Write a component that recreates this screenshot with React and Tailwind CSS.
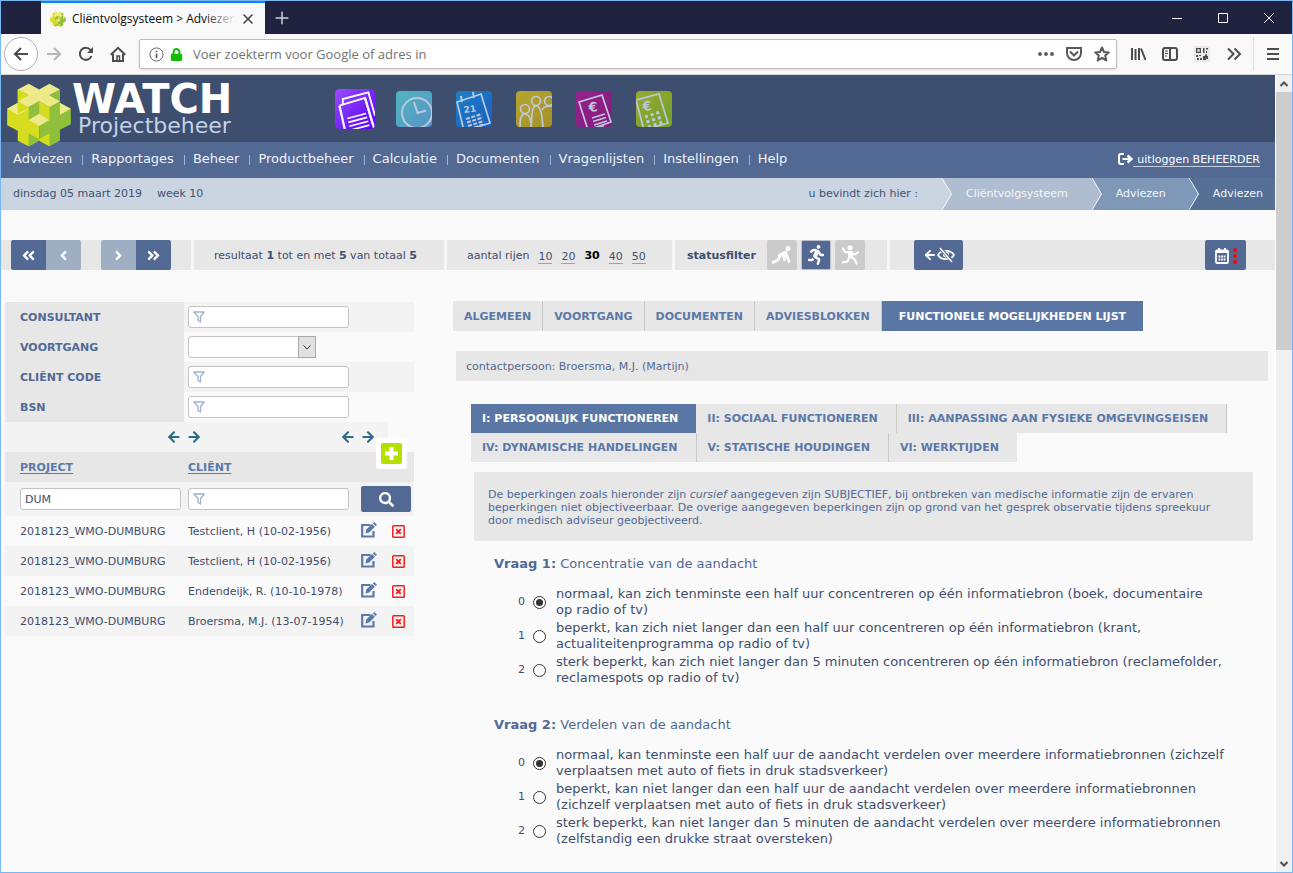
import React from "react";
import {
  FaAngleDoubleLeft,
  FaAngleDoubleRight,
  FaAngleLeft,
  FaAngleRight,
  FaSearch,
  FaRunning,
  FaLock,
} from "react-icons/fa";
import { ArrowLeft, ArrowRight, X, Plus } from "lucide-react";

const UI = "font-['Open_Sans','Noto_Sans',sans-serif]";

function Cubes({ className }) {
  const light = "#eeea8a";
  const lime = "#d6dc1e";
  const green = "#8fbf3b";
  return (
    <svg viewBox="18 15 197 194" className={className} aria-hidden="true">
      <polygon fill={lime} points="52,35 85,52 85,88 117,70 117,190 85,207 52,190 52,160 20,143 20,93 52,75" />
      <polygon fill={green} points="180,35 180,75 213,93 213,140 180,157 180,190 148,207 117,190 117,70 148,88 148,52" />
      <polygon fill={light} points="85,17 117,35 148,17 180,35 148,52 180,70 148,88 117,70 85,88 52,70 85,52 52,35" />
      <polygon fill={lime} points="52,35 85,52 52,70" />
      <polygon fill={green} points="180,35 148,52 180,70" />
      <polygon fill={light} points="20,93 52,76 52,111" />
      <polygon fill={light} points="213,93 180,76 180,111" />
      <polygon fill={light} points="52,108 85,93 85,95 52,112" />
      <polygon fill={green} points="85,88 117,70 117,108 85,127" />
      <polygon fill={lime} points="117,70 148,88 148,127 117,108" />
      <polygon fill={light} points="117,108 148,127 117,145 85,127" />
      <polygon fill={green} points="85,168 117,185 117,190 85,207" />
      <polygon fill={lime} points="148,168 117,185 117,190 148,207" />
    </svg>
  );
}

function AppTile({ children, id, from, to, active }) {
  return (
    <svg viewBox="0 0 36 36" className={active ? "size-[40px]" : "size-[36px] opacity-90"} aria-hidden="true">
      <defs>
        <linearGradient id={id} x1="0" y1="0" x2="1" y2="1">
          <stop offset="0" stopColor={from} />
          <stop offset="1" stopColor={to} />
        </linearGradient>
        <clipPath id={id + "-clip"}>
          <rect width="36" height="36" rx="4" />
        </clipPath>
      </defs>
      <g clipPath={`url(#${id}-clip)`}>
        <rect width="36" height="36" fill={`url(#${id})`} />
        <g fill="none" stroke={active ? "#ffffff" : "#ccd6e6"} strokeWidth="1.7">
          {children}
        </g>
      </g>
    </svg>
  );
}

const tileButtons = [
  {
    label: "Adviezen",
    el: (
      <AppTile id="t1" from="#9a4dff" to="#5a00f5" active>
        <path d="M7 14 L7 9 L30 3 L36 24" />
        <path d="M4 15 L27 8 L34 32" />
        <path d="M4 15 L9 37 M27 8 L36 38" strokeWidth="2" />
        <path d="M11 26.5 L28 22 M12 30 L29 25.5 M13 33.5 L30 29 M14 37 L31 32.5" strokeWidth="1.5" />
      </AppTile>
    ),
  },
  {
    label: "Uren",
    el: (
      <AppTile id="t2" from="#52c3ca" to="#5a9bd2">
        <circle cx="21" cy="22" r="15" strokeWidth="2" />
        <path d="M18 11 L21.500 22 L30 19.500" strokeWidth="2" />
      </AppTile>
    ),
  },
  {
    label: "Agenda",
    el: (
      <AppTile id="t3" from="#1a86d0" to="#1560cc">
        <path d="M1 11 L25 3 L34 32 L8 40 Z" />
        <path d="M5 5 L6 11 M17 1 L18 7" strokeWidth="2" />
        <text x="8" y="22" transform="rotate(-8 8 22)" fontSize="9" fontWeight="bold" fontFamily="DejaVu Sans" fill="#ccd6e6" stroke="none">21</text>
        <path d="M10 28 L26 23 M11 31.5 L27 26.5 M12 35 L28 30 M13 38 L29 33" strokeDasharray="4 1.5" strokeWidth="2" />
      </AppTile>
    ),
  },
  {
    label: "Relaties",
    el: (
      <AppTile id="t4" from="#c4b02b" to="#b09820">
        <circle cx="9" cy="18" r="4.5" />
        <circle cx="20" cy="10" r="4.5" />
        <circle cx="33" cy="10" r="4.5" />
        <path d="M4 37 C4 27 5 23 9 23 C12 23 14 25 15 32 M15 37 C16 22 16 15 20 15 C25 15 26 24 27 37 M26 19 C28 15 31 15 36 15" />
      </AppTile>
    ),
  },
  {
    label: "Facturen",
    el: (
      <AppTile id="t5" from="#a01f90" to="#8a1580">
        <path d="M3 11 L26 4 L35 31 L12 39 Z" />
        <text x="13" y="21" transform="rotate(-6 13 21)" fontSize="13" fontWeight="bold" fontFamily="DejaVu Sans" fill="#ccd6e6" stroke="none">€</text>
        <path d="M16 27 L29 23 M17 30.5 L30 26.5 M18 34 L31 30 M19 37.5 L28 34.5" />
      </AppTile>
    ),
  },
  {
    label: "Calculatie",
    el: (
      <AppTile id="t6" from="#a3b52a" to="#78a826">
        <path d="M0 9 L23 3 L32 32 L8 39 Z" />
        <text x="7" y="20" transform="rotate(-6 7 20)" fontSize="13" fontWeight="bold" fontFamily="DejaVu Sans" fill="#ccd6e6" stroke="none">€</text>
        <path d="M9 26 L24 21 M10.500 31 L25.500 26 M12 36 L27 31" strokeDasharray="3 3" strokeWidth="3" />
      </AppTile>
    ),
  },
];

const menu = ["Adviezen", "Rapportages", "Beheer", "Productbeheer", "Calculatie", "Documenten", "Vragenlijsten", "Instellingen", "Help"];

function BrowserBar() {
  const icon = "size-4 fill-none stroke-[#4d4d4f] stroke-2";
  return (
    <header className={`shrink-0 ${UI}`}>
      <div className="flex h-[33px] items-stretch bg-[#202340]">
        <div className="ml-10 flex w-[224px] items-center border-t-2 border-[#0a84ff] bg-[#f9f9fa] pr-2 pl-[9px]">
          <Cubes className="mr-1.5 size-4" />
          <span className="relative w-[164px] overflow-hidden text-[12px] whitespace-nowrap text-[#0c0c0d]">
            Cliëntvolgsysteem &gt; Adviezen &gt;
            <span className="absolute inset-y-0 right-0 w-8 bg-gradient-to-r from-transparent to-[#f9f9fa]" />
          </span>
          <button aria-label="Tabblad sluiten" className="ml-1"><X className="size-4 text-[#3a3a3c]" strokeWidth={2.2} /></button>
        </div>
        <button aria-label="Nieuw tabblad" className="ml-[7px]"><Plus className="size-5 text-[#d0d0d8]" strokeWidth={1.800} /></button>
        <div className="ml-auto flex items-center">
          <button aria-label="Minimaliseren" className="flex w-[46px] justify-center"><svg viewBox="0 0 10 10" className="size-[10px] stroke-white"><path d="M0 5.500H10" /></svg></button>
          <button aria-label="Maximaliseren" className="flex w-[46px] justify-center"><svg viewBox="0 0 10 10" className="size-[10px] fill-none stroke-white"><path d="M.5 .5H9.500V9.500H.5Z" /></svg></button>
          <button aria-label="Sluiten" className="flex w-[46px] justify-center"><svg viewBox="0 0 10 10" className="size-[10px] stroke-white"><path d="M0 0L10 10M10 0L0 10" /></svg></button>
        </div>
      </div>
      <div className="flex h-[41px] items-center border-b border-[#d4d4d6] bg-[#f9f9fa]">
        <button aria-label="Terug" className="ml-[3px] flex size-[34px] items-center justify-center rounded-full border border-[#b1b1b3] bg-white">
          <svg viewBox="0 0 16 16" className={icon}><path d="M15 8H2M8 2L2 8L8 14" /></svg>
        </button>
        <button aria-label="Vooruit" className="ml-2">
          <svg viewBox="0 0 16 16" className="size-4 fill-none stroke-[#b5b5b7] stroke-2"><path d="M1 8H14M8 2L14 8L8 14" /></svg>
        </button>
        <button aria-label="Vernieuwen" className="ml-4">
          <svg viewBox="0 0 16 16" className={icon}><path d="M13.500 10A6 6 0 1 1 12.500 4" /><path d="M15 1V7H9Z" fill="#4d4d4f" stroke="none" /></svg>
        </button>
        <button aria-label="Startpagina" className="ml-4">
          <svg viewBox="0 0 16 16" className={icon}><path d="M.8 8.800L8 1.800L15.200 8.800M3 8V15H13V8" /><path d="M7 15V10H9.500V15" strokeWidth="1.500" /></svg>
        </button>
        <label className="ml-[13px] flex h-[30px] flex-1 items-center rounded-[2px] border border-[#bcbcbe] bg-white pr-1.5 pl-[9px] shadow-sm">
          <svg viewBox="0 0 16 16" className="size-[15px] fill-none stroke-[#606062]"><circle cx="8" cy="8" r="7" /><path d="M8 7V12M8 4V5.600" strokeWidth="1.800" /></svg>
          <FaLock className="ml-1.5 size-[13px] text-[#12bc00]" />
          <input aria-label="Adres" placeholder="Voer zoekterm voor Google of adres in" className="ml-2.5 min-w-0 flex-1 pt-0.5 text-[13px] outline-none placeholder:text-[#737373]" />
          <svg viewBox="0 0 16 4" className="h-1 w-4 fill-[#5a5a5c]"><circle cx="2" cy="2" r="1.900" /><circle cx="8" cy="2" r="1.900" /><circle cx="14" cy="2" r="1.900" /></svg>
          <svg viewBox="0 0 16 16" className="ml-3 size-4 fill-none stroke-[#5a5a5c] stroke-2"><path d="M1 2H15V7A7 7 0 0 1 1 7ZM4.500 6L8 9.500L11.500 6" strokeLinecap="round" /></svg>
          <svg viewBox="0 0 16 16" className="ml-3 size-4 fill-none stroke-[#5a5a5c] stroke-2"><path d="M8 1.500L10 6L14.700 6.400L11.200 9.600L12.300 14.400L8 11.800L3.700 14.400L4.800 9.600L1.300 6.400L6 6Z" strokeLinejoin="round" /></svg>
        </label>
        <button aria-label="Bibliotheek" className="ml-[13px]"><svg viewBox="0 0 16 16" className={icon}><path d="M2 2V14M5.500 3V14M9 2V14M11 2.500L15.500 14" /></svg></button>
        <button aria-label="Zijbalk" className="ml-4"><svg viewBox="0 0 16 16" className={icon}><rect x="1" y="2" width="14" height="12" rx="2" /><path d="M8 2V14" /><path d="M3 5H6M3 7.500H6M3 10H5" strokeWidth="1" /></svg></button>
        <button aria-label="QR-code" className="ml-4">
          <svg viewBox="0 0 16 16" className="size-4 fill-[#4d4d4f]">
            <rect width="16" height="16" fill="#e9e9ea" />
            <path fillRule="evenodd" d="M2 2H7V7H2ZM3.300 3.300V5.700H5.700V3.300ZM9 2H10.500V7H9ZM12 2H14V3.500H12ZM12 5H13V7H12ZM2 9H4V11H2ZM5 9H7V10H5ZM3 12H5V14H3ZM6 12H8V14H6ZM9 10H11V8.500H13V10H14V13H12V14H9Z" />
          </svg>
        </button>
        <button aria-label="Meer" className="ml-4"><svg viewBox="0 0 16 16" className={icon}><path d="M2 2.500L7.500 8L2 13.500M8.500 2.500L14 8L8.500 13.500" /></svg></button>
        <span className="ml-[11px] h-[34px] border-l border-[#dcdcde]" />
        <button aria-label="Menu" className="mr-[11px] ml-[11px]"><svg viewBox="0 0 16 16" className={icon}><path d="M2 3H14M2 8H14M2 13H14" /></svg></button>
      </div>
    </header>
  );
}

function CrumbArrow({ from, to }) {
  return (
    <svg viewBox="0 0 10 32" className="h-8 w-[10px] shrink-0" aria-hidden="true">
      <rect width="10" height="32" fill={to} />
      <path d="M0 0L9.500 16L0 32Z" fill={from} />
      <path d="M0 0L9.500 16L0 32" fill="none" stroke="#f4f6f9" />
    </svg>
  );
}

function AppHeader() {
  return (
    <div>
      <div className="relative flex h-[67px] items-start bg-[#3e4e6e]">
        <a href="#home" className="absolute top-[8px] left-[5px] z-10 flex" aria-label="WATCH Projectbeheer">
          <Cubes className="h-[64px] w-[66px]" />
        </a>
        <div className="w-[334px] shrink-0 pl-[71px] text-white">
          <div className="pt-1 text-[40px] leading-[40px] font-bold">WATCH</div>
          <div className="pl-[6px] text-[22px] leading-[14px] text-[#c3d2e6]">Projectbeheer</div>
        </div>
        <nav className="mt-[14px] flex items-center" aria-label="Modules">
          {tileButtons.map((t, i) => (
            <a key={t.label} href="#module" aria-label={t.label} className={i === 0 ? "mr-[21px] flex" : "mr-6 flex"}>{t.el}</a>
          ))}
        </nav>
      </div>
      <div className="flex h-9 items-center bg-[#526994] pr-[15px] pl-3">
        <nav className="flex items-center pb-[3px] text-[13px] text-[#eef2f8]">
          {menu.map((m, i) => (
            <React.Fragment key={m}>
              {i > 0 && <span className="mt-[3px] mr-2 ml-[10px] h-[10px] border-l border-[#9db4d3]" />}
              <a href="#menu">{m}</a>
            </React.Fragment>
          ))}
        </nav>
        <a href="#logout" className="ml-auto flex items-center pb-[3px] text-[11px] text-white">
          <svg viewBox="0 0 15 12" className="h-3 w-[15px] fill-none stroke-white stroke-2" aria-hidden="true"><path d="M6 1H3A2 2 0 0 0 1 3V9A2 2 0 0 0 3 11H6M4.500 6H12" /><path d="M9.500 2.500L13.500 6L9.500 9.500" strokeWidth="2.400" /></svg>
          <span className="mt-0.5 border-b border-[#c4cfdf] pl-1 leading-[13px]">uitloggen BEHEERDER</span>
        </a>
      </div>
      <div className="flex h-8 items-center bg-[#cbd5e1] text-[11px] text-[#3e5274]">
        <span className="pl-3">dinsdag 05 maart 2019</span>
        <span className="pl-[15px]">week 10</span>
        <nav className="ml-auto flex items-stretch text-[#f4f6f9]" aria-label="Kruimelpad">
          <span className="flex items-center pr-[24px] text-[#3e5274]">u bevindt zich hier :</span>
          <CrumbArrow from="#cbd5e1" to="#afbdd1" />
          <a href="#a" className="flex items-center bg-[#afbdd1] pr-[24px] pl-3.5">Cliëntvolgsysteem</a>
          <CrumbArrow from="#afbdd1" to="#7f98b7" />
          <a href="#b" className="flex items-center bg-[#7f98b7] pr-[23px] pl-3.5">Adviezen</a>
          <CrumbArrow from="#7f98b7" to="#547094" />
          <a href="#c" className="flex items-center bg-[#547094] pr-3 pl-3.5">Adviezen</a>
        </nav>
      </div>
    </div>
  );
}

function Crawler() {
  return (
    <svg viewBox="0 0 20 20" className="size-5" aria-hidden="true">
      <circle cx="16" cy="3.500" r="2.500" fill="white" />
      <path d="M13.500 7L17 16.500M13 7L7 10.500M12.500 8L12.500 15M8 11L6 15L1 17.500" fill="none" stroke="white" strokeWidth="2.600" strokeLinecap="round" />
      <path d="M8 9L13 6L15 9L11 13Z" fill="white" />
    </svg>
  );
}

function Finisher() {
  return (
    <svg viewBox="0 0 20 20" className="size-5" aria-hidden="true">
      <circle cx="10" cy="2.800" r="2.500" fill="white" />
      <path d="M10 7L10.500 12M9 7.500L5 7L3 3.500M11 7.500L14.500 9.500L18 7.500M11 12L14.500 14L16.500 18.500M9.500 12L7.500 16.500L3 17.500" fill="none" stroke="white" strokeWidth="2.200" strokeLinecap="round" strokeLinejoin="round" />
      <path d="M7.500 6H12.500L13 13H8.500Z" fill="white" />
    </svg>
  );
}

function Toolbar() {
  const blue = "flex h-[30px] w-[35px] items-center justify-center bg-[#526994] text-white";
  const pale = "flex h-[30px] w-[35px] items-center justify-center bg-[#9fafc3] text-white";
  const sep = "w-[3px] shrink-0 bg-[#f6f6f6]";
  const count = "border-b border-[#8fa3c4] leading-[13px]";
  return (
    <div className="mt-[30px] flex h-[30px] items-stretch bg-[#e7e7e7] text-[11px] text-[#3e4e6e]">
      <div className="flex w-[190px] pl-2.5">
        <button aria-label="Eerste pagina" className={`${blue} rounded-l-[2px]`}><FaAngleDoubleLeft className="size-[15px]" /></button>
        <button aria-label="Vorige pagina" className={`${pale} rounded-r-[2px]`}><FaAngleLeft className="size-[15px]" /></button>
        <button aria-label="Volgende pagina" className={`${pale} ml-5 rounded-l-[2px]`}><FaAngleRight className="size-[15px]" /></button>
        <button aria-label="Laatste pagina" className={`${blue} rounded-r-[2px]`}><FaAngleDoubleRight className="size-[15px]" /></button>
      </div>
      <span className={sep} />
      <p className="flex w-[250px] items-center pt-[3px] pl-5"><span>resultaat <b>1</b> tot en met <b>5</b> van totaal <b>5</b></span></p>
      <span className={sep} />
      <div className="flex w-[225px] items-center gap-[9px] pt-[3px] pl-5">
        <span>aantal rijen</span>
        <a href="#10" className={count}>10</a>
        <a href="#20" className={count}>20</a>
        <b className="text-black">30</b>
        <a href="#40" className={count}>40</a>
        <a href="#50" className={count}>50</a>
      </div>
      <span className={sep} />
      <div className="flex w-[212px] items-center pl-3">
        <b className="w-20 pt-[3px]">statusfilter</b>
        <div className="flex gap-1">
          <button aria-label="Niet gestart" className="flex size-[30px] items-center justify-center rounded-[2px] bg-[#cbcbcb]"><Crawler /></button>
          <button aria-label="Lopend" className="flex size-[30px] items-center justify-center rounded-[2px] border border-[#b9bec8] bg-[#526994]"><FaRunning className="size-5 text-white" /></button>
          <button aria-label="Afgerond" className="flex size-[30px] items-center justify-center rounded-[2px] bg-[#cbcbcb]"><Finisher /></button>
        </div>
      </div>
      <span className={sep} />
      <div className="flex flex-1 justify-between pr-[29px] pl-[24px]">
        <button aria-label="Kolom verbergen" className="flex w-[49px] items-center justify-center rounded-[2px] bg-[#526994] text-white">
          <ArrowLeft className="size-3.5" strokeWidth={3.4} />
          <svg viewBox="0 0 18 16" className="h-4 w-[18px] fill-none stroke-white"><path d="M1 8C4 2.500 14 2.500 17 8C14 13.500 4 13.500 1 8Z" strokeWidth="1.600" /><circle cx="9" cy="7.500" r="3" fill="white" stroke="none" /><path d="M3 1L16 15" stroke="#526994" strokeWidth="3.400" /><path d="M3 1L15 15" strokeWidth="1.500" /></svg>
        </button>
        <button aria-label="Agenda opties" className="flex w-[41px] items-center justify-center gap-1 rounded-[2px] bg-[#526994] pt-0.5">
          <svg viewBox="0 0 14 16" className="h-4 w-3.5 fill-none stroke-white"><rect x="1" y="2.500" width="12" height="12.500" rx="1" strokeWidth="1.800" /><path d="M1 4H13M4 0V3M10 0V3" strokeWidth="2" /><path d="M3.500 8.500H10.500M3.500 11.500H10.500" strokeWidth="1.800" strokeDasharray="1.800 0.800" /></svg>
          <svg viewBox="0 0 4 16" className="h-4 w-1 fill-[#ff0000]"><circle cx="2" cy="2.200" r="2" /><circle cx="2" cy="8" r="2" /><circle cx="2" cy="13.800" r="2" /></svg>
        </button>
      </div>
    </div>
  );
}

function FilterInput({ id, label, value }) {
  return (
    <span className="flex h-[22px] w-[161px] items-center rounded-[3px] border border-[#c4c4c4] bg-white pl-1">
      {!value && (
        <svg viewBox="0 0 12 12" className="size-3 shrink-0 fill-none stroke-[#9fb3cd]" aria-hidden="true"><path d="M.8 1H11.200L7.500 5.500V11L5 9.500V5.500Z" strokeWidth="1.300" strokeLinejoin="round" /></svg>
      )}
      <input id={id} aria-label={label} defaultValue={value} className="w-full min-w-0 bg-transparent pt-0.5 outline-none" />
    </span>
  );
}

const clients = ["Testclient, H (10-02-1956)", "Testclient, H (10-02-1956)", "Endendeijk, R. (10-10-1978)", "Broersma, M.J. (13-07-1954)"];

function EditIcon() {
  return (
    <svg viewBox="0 0 16 16" className="mb-0.5 size-4 fill-none stroke-[#5a78a8]" aria-hidden="true">
      <path d="M9.500 3H1.200V14.500H12.500V9" strokeWidth="2.200" />
      <path d="M4.500 11.500L5.200 7.600L11 2L13.900 4.800L8.200 10.600Z" fill="#5a78a8" stroke="none" />
      <path d="M11.800 1.300L13.200 0L16 2.700L14.600 4.100Z" fill="#5a78a8" stroke="none" />
    </svg>
  );
}

function DeleteIcon() {
  return (
    <svg viewBox="0 0 13 13" className="size-[13px] fill-none stroke-[#f21d1d]" aria-hidden="true">
      <rect x=".8" y=".8" width="11.400" height="11.400" rx=".8" strokeWidth="1.500" />
      <path d="M4.200 4.200L8.800 8.800M8.800 4.200L4.200 8.800" strokeWidth="1.800" />
    </svg>
  );
}

function ColumnArrows() {
  const a = "size-4 text-[#2e6b85]";
  return (
    <span className="flex gap-1">
      <ArrowLeft className={a} strokeWidth={3.2} />
      <ArrowRight className={a} strokeWidth={3.2} />
    </span>
  );
}

function ClientPanel() {
  const fields = ["CONSULTANT", "VOORTGANG", "CLIËNT CODE", "BSN"];
  return (
    <aside className="mt-[32px] ml-1 w-[409px] shrink-0 text-[11px] text-[#3e4e6e]">
      {fields.map((f, i) => (
        <div key={f} className={`flex h-[30px] ${i % 2 ? "" : "bg-[#f3f3f3]"}`}>
          <label htmlFor={`f${i}`} className="flex w-[179px] items-center bg-[#e7e7e7] pt-0.5 pl-[15px] font-bold text-[#526994]">{f}</label>
          <div className="flex items-center pl-1">
            {i === 1 ? (
              <span className="relative flex">
                <select id="f1" className="h-[22px] w-[128px] appearance-none rounded-[3px] border border-[#c4c4c4] bg-white" />
                <span className="pointer-events-none absolute inset-y-0 right-0 flex w-[18px] items-center justify-center border border-[#a8a8a8] bg-[#e1e1e1]">
                  <svg viewBox="0 0 8 5" className="h-[5px] w-2 fill-none stroke-[#333]"><path d="M.5 .5L4 4L7.500 .5" /></svg>
                </span>
              </span>
            ) : (
              <FilterInput id={`f${i}`} />
            )}
          </div>
        </div>
      ))}
      <div className="flex h-[30px] w-[383px] items-center justify-between bg-[#f3f3f3] pr-3 pl-[161px]">
        <ColumnArrows />
        <ColumnArrows />
      </div>
      <div className="relative">
        <button aria-label="Toevoegen" className="absolute -top-3.5 left-[371px] flex size-[31px] items-center justify-center rounded-[3px] bg-white">
          <svg viewBox="0 0 21 21" className="size-[21px]"><rect width="21" height="21" rx="2" fill="#b4e000" /><path d="M10.500 4V17M4 10.500H17" stroke="white" strokeWidth="4" /></svg>
        </button>
        <table className="w-full table-fixed border-collapse">
          <colgroup>
            <col className="w-[179px]" />
            <col className="w-[174px]" />
            <col className="w-[31px]" />
            <col className="w-[25px]" />
          </colgroup>
          <thead>
            <tr className="h-[30px] bg-[#e7e7e7] text-left text-[#5a78a8]">
              <th className="p-0 pt-0.5 pl-[15px]"><a href="#project" className="underline underline-offset-2">PROJECT</a></th>
              <th className="p-0 pt-0.5 pl-1"><a href="#client" className="underline underline-offset-2">CLIËNT</a></th>
              <th colSpan={2} className="p-0" />
            </tr>
            <tr className="h-[34px] bg-[#f3f3f3] text-left font-normal">
              <td className="p-0 pl-[15px]"><FilterInput label="Project" value="DUM" /></td>
              <td className="p-0 pl-1"><FilterInput label="Cliënt" /></td>
              <td colSpan={2} className="p-0 pl-[3px]">
                <button aria-label="Zoeken" className="flex h-[26px] w-[50px] items-center justify-center rounded-[2px] bg-[#526994] text-white"><FaSearch className="size-[15px]" /></button>
              </td>
            </tr>
          </thead>
          <tbody>
            {clients.map((c, i) => (
              <tr key={i} className={`h-[30px] whitespace-nowrap ${i % 2 ? "bg-[#f3f3f3]" : ""}`}>
                <td className="p-0 pt-[3px] pl-[15px]">2018123_WMO-DUMBURG</td>
                <td className="p-0 pt-[3px] pl-1">{c}</td>
                <td className="p-0 pl-[3px]"><button aria-label="Bewerken" className="flex"><EditIcon /></button></td>
                <td className="p-0 pl-[3px]"><button aria-label="Verwijderen" className="flex"><DeleteIcon /></button></td>
              </tr>
            ))}
          </tbody>
        </table>
      </div>
    </aside>
  );
}

const questions = [
  {
    title: "Concentratie van de aandacht",
    options: [
      ["normaal, kan zich tenminste een half uur concentreren op één informatiebron (boek, documentaire", "op radio of tv)"],
      ["beperkt, kan zich niet langer dan een half uur concentreren op één informatiebron (krant,", "actualiteitenprogramma op radio of tv)"],
      ["sterk beperkt, kan zich niet langer dan 5 minuten concentreren op één informatiebron (reclamefolder,", "reclamespots op radio of tv)"],
    ],
  },
  {
    title: "Verdelen van de aandacht",
    options: [
      ["normaal, kan tenminste een half uur de aandacht verdelen over meerdere informatiebronnen (zichzelf", "verplaatsen met auto of fiets in druk stadsverkeer)"],
      ["beperkt, kan niet langer dan een half uur de aandacht verdelen over meerdere informatiebronnen", "(zichzelf verplaatsen met auto of fiets in druk stadsverkeer)"],
      ["sterk beperkt, kan niet langer dan 5 minuten de aandacht verdelen over meerdere informatiebronnen", "(zelfstandig een drukke straat oversteken)"],
    ],
  },
];

const tabs = ["ALGEMEEN", "VOORTGANG", "DOCUMENTEN", "ADVIESBLOKKEN", "FUNCTIONELE MOGELIJKHEDEN LIJST"];
const subTabs = [
  "I: PERSOONLIJK FUNCTIONEREN",
  "II: SOCIAAL FUNCTIONEREN",
  "III: AANPASSING AAN FYSIEKE OMGEVINGSEISEN",
  "IV: DYNAMISCHE HANDELINGEN",
  "V: STATISCHE HOUDINGEN",
  "VI: WERKTIJDEN",
];

function Detail() {
  const idle = "border-r border-[#c9c9c9] bg-[#e7e7e7] text-[#5a78a8] last:border-r-0";
  const current = "bg-[#5a76a4] text-white";
  return (
    <main className="mt-[31px] ml-[39px] min-w-0 flex-1 text-[11px] text-[#526994]">
      <div className="flex font-bold">
        {tabs.map((t, i) => (
          <button key={t} className={`h-[30px] pt-0.5 whitespace-nowrap ${i === 4 ? `${current} px-[17px]` : `${idle} px-[11px]`}`}>{t}</button>
        ))}
      </div>
      <div className="mt-5 mr-[7px] ml-[3px] flex h-[30px] items-center bg-[#e7e7e7] pt-0.5 pl-2.5">contactpersoon: Broersma, M.J. (Martijn)</div>
      <div className="mt-[23px] mr-[13px] ml-[18px] flex flex-wrap font-bold">
        {subTabs.map((t, i) => (
          <button key={t} className={`h-[29px] pt-0.5 pr-[18px] pl-[11px] whitespace-nowrap ${i === 0 ? current : idle}`}>{t}</button>
        ))}
      </div>
      <p className="mt-2.5 mr-[22px] ml-[21px] bg-[#e7e7e7] pt-4 pb-3.5 pl-3.5 leading-[13px] whitespace-nowrap">
        De beperkingen zoals hieronder zijn <i>cursief</i> aangegeven zijn SUBJECTIEF, bij ontbreken van medische informatie zijn de ervaren
        <br />
        beperkingen niet objectiveerbaar. De overige aangegeven beperkingen zijn op grond van het gesprek observatie tijdens spreekuur
        <br />
        door medisch adviseur geobjectiveerd.
      </p>
      {questions.map((q, qi) => (
        <fieldset key={q.title} className={`${qi === 0 ? "mt-[15px]" : "mt-[31px]"} ml-[41px] text-[13px]`}>
          <legend className="h-4 leading-4"><b>Vraag {qi + 1}:</b> {q.title}</legend>
          <div className="mt-3.5 flex flex-col gap-0.5 pl-6 text-[#3e4e6e]">
            {q.options.map((o, oi) => (
              <label key={oi} className="flex items-center leading-4 whitespace-nowrap">
                <span className="w-[15px] text-[11px]">{oi}</span>
                <input type="radio" name={`q${qi}`} defaultChecked={oi === 0} className="peer sr-only" />
                <span className="flex size-[13px] items-center justify-center rounded-full border border-[#333] bg-white after:size-[7px] after:rounded-full peer-checked:after:bg-[#333]" />
                <span className="pl-2.5">{o[0]}<br />{o[1]}</span>
              </label>
            ))}
          </div>
        </fieldset>
      ))}
    </main>
  );
}

function ScrollRail() {
  return (
    <div className="flex w-[17px] shrink-0 flex-col items-center border-l border-white bg-[#f0f0f0]" aria-hidden="true">
      <span className="flex h-[17px] items-center"><svg viewBox="0 0 8 6" className="h-1.5 w-2 fill-none stroke-[#505050] stroke-2"><path d="M.5 5L4 1.500L7.500 5" /></svg></span>
      <span className="h-[258px] w-full bg-[#cdcdcd]" />
      <span className="mt-auto flex h-[17px] items-center"><svg viewBox="0 0 8 6" className="h-1.5 w-2 fill-none stroke-[#505050] stroke-2"><path d="M.5 1L4 4.500L7.500 1" /></svg></span>
    </div>
  );
}

export default function App() {
  return (
    <div className="flex h-screen flex-col overflow-hidden border border-[#78b8f5] bg-[#fafafa]">
      <BrowserBar />
      <div className="flex min-h-0 flex-1 font-['DejaVu_Sans',Verdana,sans-serif]">
        <div className="min-w-0 flex-1 overflow-hidden">
          <AppHeader />
          <Toolbar />
          <div className="flex">
            <ClientPanel />
            <Detail />
          </div>
        </div>
        <ScrollRail />
      </div>
    </div>
  );
}
